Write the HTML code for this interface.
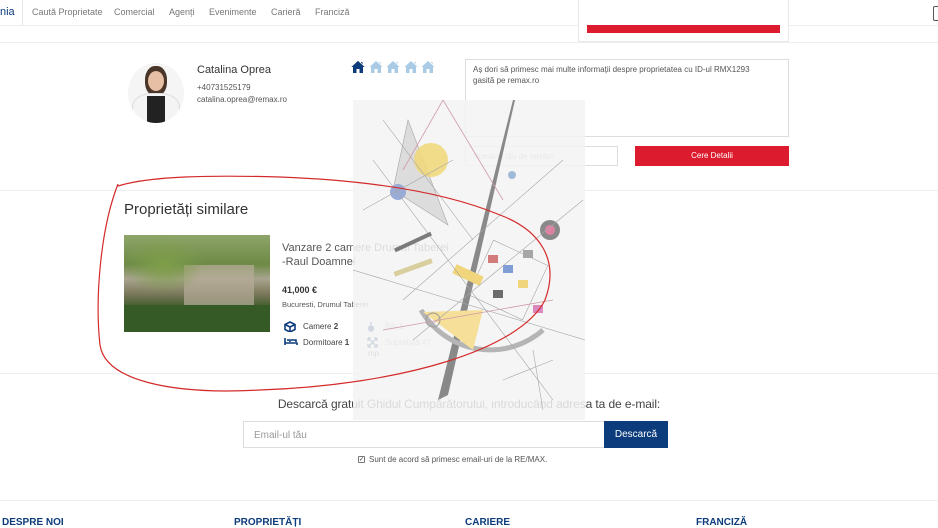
<!DOCTYPE html>
<html><head><meta charset="utf-8"><style>
*{margin:0;padding:0;box-sizing:border-box}
body{width:938px;height:527px;overflow:hidden;background:#fff;font-family:"Liberation Sans",Arial,sans-serif;color:#333;position:relative}
.a{position:absolute;white-space:nowrap}
.hl{position:absolute;left:0;width:938px;height:1px;background:#eee}
.nav{font-size:9px;color:#777;top:7px}
</style></head><body>
<div class="a" style="left:0;top:6px;font-size:11px;color:#0c3c7c">nia</div>
<div class="a" style="left:22px;top:0;width:1px;height:25px;background:#e5e5e5"></div>
<div class="a nav" style="left:32px">Caută Proprietate</div>
<div class="a nav" style="left:114px">Comercial</div>
<div class="a nav" style="left:169px">Agenți</div>
<div class="a nav" style="left:209px">Evenimente</div>
<div class="a nav" style="left:271px">Carieră</div>
<div class="a nav" style="left:315px">Franciză</div>
<div class="a" style="left:933px;top:6px;width:10px;height:15px;border:1px solid #555;border-radius:2px"></div>
<div class="hl" style="top:25px"></div>
<div class="a" style="left:578px;top:0;width:211px;height:42px;border:1px solid #e8e8e8;border-top:none;background:#fff"></div>
<div class="a" style="left:587px;top:25px;width:193px;height:8px;background:#dc1c2e"></div>
<div class="hl" style="top:42px"></div>

<div class="a" style="left:128px;top:63px;width:56px;height:60px;border-radius:50%;overflow:hidden;background:#f5f5f5">
 <div class="a" style="left:17px;top:3px;width:22px;height:30px;border-radius:45%;background:#4a3628"></div>
 <div class="a" style="left:20px;top:8px;width:16px;height:20px;border-radius:50%;background:#e6bfa5"></div>
 <div class="a" style="left:4px;top:30px;width:48px;height:35px;border-radius:40% 40% 0 0;background:#f4f4f4;border:1px solid #ddd"></div>
 <div class="a" style="left:19px;top:33px;width:18px;height:30px;background:#222"></div>
</div>
<div class="a" style="left:197px;top:64px;font-size:11px;color:#333">Catalina Oprea</div>
<div class="a" style="left:197px;top:83px;font-size:8px;color:#555">+40731525179</div>
<div class="a" style="left:197px;top:95px;font-size:8px;color:#555">catalina.oprea@remax.ro</div>

<svg class="a" style="left:351px;top:60px" width="88" height="14" viewBox="0 0 88 14">
 <g id="h"><path d="M7 1 L0.5 7 L2 7 L2 13 L5.5 13 L5.5 9 L8.5 9 L8.5 13 L12 13 L12 7 L13.5 7 Z M10 2 L11.5 2 L11.5 4.5 Z"/></g>
 <use href="#h" fill="#0c3c7c"/>
 <use href="#h" x="18" fill="#a9cbe6"/><use href="#h" x="35" fill="#a9cbe6"/><use href="#h" x="53" fill="#a9cbe6"/><use href="#h" x="70" fill="#a9cbe6"/>
</svg>

<div class="a" style="left:465px;top:59px;width:324px;height:78px;border:1px solid #ddd;font-size:8px;line-height:11px;color:#555;padding:4px 26px 4px 7px;white-space:normal">Aș dori să primesc mai multe informații despre proprietatea cu ID-ul RMX1293 gasită pe remax.ro</div>
<div class="a" style="left:465px;top:146px;width:153px;height:20px;border:1px solid #ddd;font-size:8px;color:#aaa;padding:5px 7px">Numărul tău de telefon</div>
<div class="a" style="left:635px;top:146px;width:154px;height:20px;background:#dc1c2e;color:#fff;font-size:8px;text-align:center;line-height:20px">Cere Detalii</div>
<div class="hl" style="top:190px"></div>

<div class="a" style="left:124px;top:201px;font-size:15px;color:#333">Proprietăți similare</div>
<div class="a" style="left:124px;top:235px;width:146px;height:97px;background:linear-gradient(180deg,#8fa56a 0%,#6d8a45 30%,#a8a48e 45%,#7d7a5e 60%,#3f5a2a 75%,#2d4a1e 100%)">
 <div class="a" style="left:60px;top:30px;width:70px;height:45px;background:#b6ad98;opacity:.7"></div>
 <div class="a" style="left:0;top:70px;width:146px;height:27px;background:#355a25"></div>
 <div class="a" style="left:0;top:0;width:80px;height:60px;background:radial-gradient(#7f9f4a,transparent 70%)"></div>
</div>
<div class="a" style="left:282px;top:241px;font-size:11px;line-height:14px;color:#555">Vanzare 2 camere Drumul Taberei<br>-Raul Doamnei</div>
<div class="a" style="left:282px;top:285px;font-size:9px;font-weight:bold;color:#333">41,000 €</div>
<div class="a" style="left:282px;top:300px;font-size:7.5px;color:#555">Bucuresti, Drumul Taberei</div>
<svg class="a" style="left:284px;top:321px" width="12" height="11"><path d="M6 1 L11 3.5 L11 8.5 L6 11 L1 8.5 L1 3.5 Z M1 3.5 L6 6 L11 3.5 M6 6 L6 11" fill="none" stroke="#0c3c7c" stroke-width="1.6"/></svg>
<div class="a" style="left:303px;top:322px;font-size:8px;color:#444">Camere <b>2</b></div>
<svg class="a" style="left:284px;top:337px" width="14" height="9"><path d="M1 1 L1 8 M1 6 L13 6 L13 8 M3 3 L6 3 L6 5 M7 3 L12 3 L12 5" fill="none" stroke="#0c3c7c" stroke-width="1.6"/></svg>
<div class="a" style="left:303px;top:338px;font-size:8px;color:#444">Dormitoare <b>1</b></div>
<svg class="a" style="left:367px;top:321px" width="8" height="11"><path d="M4 1 L4 4 M1.5 7.5 A2.5 2.5 0 1 0 6.5 7.5 A2.5 2.5 0 1 0 1.5 7.5" fill="#0c3c7c" stroke="#0c3c7c" stroke-width="1.3"/></svg>
<div class="a" style="left:385px;top:322px;font-size:8px;color:#aaa">Băi 1</div>
<svg class="a" style="left:367px;top:337px" width="11" height="11"><path d="M1 1 L10 10 M10 1 L1 10 M1 1 L4 1 M1 1 L1 4 M10 1 L7 1 M10 1 L10 4 M1 10 L4 10 M1 10 L1 7 M10 10 L7 10 M10 10 L10 7" stroke="#0c3c7c" stroke-width="1.3"/></svg>
<div class="a" style="left:385px;top:338px;font-size:8px;color:#aaa">Suprafață 47</div>
<div class="a" style="left:368px;top:349px;font-size:8px;color:#666">mp</div>
<div class="hl" style="top:373px"></div>

<div class="a" style="left:0;width:938px;text-align:center;top:397px;font-size:12px;color:#444;letter-spacing:-0.1px">Descarcă gratuit Ghidul Cumpărătorului, introducând adresa ta de e-mail:</div>
<div class="a" style="left:243px;top:421px;width:362px;height:27px;border:1px solid #ddd;font-size:10px;color:#999;padding:8px 10px">Email-ul tău</div>
<div class="a" style="left:604px;top:421px;width:64px;height:27px;background:#0c3c7c;color:#fff;font-size:10px;text-align:center;line-height:27px">Descarcă</div>
<div class="a" style="left:358px;top:456px;width:7px;height:7px;border:1px solid #777;border-radius:1px;font-size:6px;line-height:6px;text-align:center">✓</div>
<div class="a" style="left:369px;top:455px;font-size:8px;color:#555">Sunt de acord să primesc email-uri de la RE/MAX.</div>
<div class="hl" style="top:500px"></div>
<div class="a" style="left:2px;top:517px;font-size:10px;font-weight:bold;color:#0c3c7c">DESPRE NOI</div>
<div class="a" style="left:234px;top:517px;font-size:10px;font-weight:bold;color:#0c3c7c">PROPRIETĂȚI</div>
<div class="a" style="left:465px;top:517px;font-size:10px;font-weight:bold;color:#0c3c7c">CARIERE</div>
<div class="a" style="left:696px;top:517px;font-size:10px;font-weight:bold;color:#0c3c7c">FRANCIZĂ</div>

<svg class="a" style="left:353px;top:100px" width="232" height="320" viewBox="0 0 232 320">
 <rect width="232" height="320" fill="#f3f3f3" opacity=".85"/>
 <g opacity=".85">
 <polygon points="55,20 95,125 40,90" fill="#d8d8d8" stroke="#999" stroke-width=".6"/>
 <circle cx="78" cy="60" r="17" fill="#f0d468" opacity=".9"/>
 <circle cx="45" cy="92" r="8" fill="#8a9fd2"/>
 <circle cx="197" cy="130" r="10" fill="#777"/><circle cx="197" cy="130" r="5" fill="#d96f95"/>
 <polygon points="160,0 162,0 95,295 85,300" fill="#777"/>
 <circle cx="159" cy="75" r="4" fill="#8fb0d2"/>
 <path d="M68 210 A80 80 0 0 0 190 230" fill="none" stroke="#aaa" stroke-width="5"/>
 <path d="M70 212 L130 210 L120 250 Z" fill="#f5dc8a"/>
 <g stroke="#888" stroke-width=".5">
 <rect x="125" y="150" width="60" height="60" fill="none" transform="rotate(25 155 180)"/>
 </g>
 <rect x="135" y="155" width="10" height="8" fill="#c66"/><rect x="150" y="165" width="10" height="8" fill="#6a8fd0"/><rect x="165" y="180" width="10" height="8" fill="#f0d068"/><rect x="180" y="205" width="10" height="8" fill="#d675b5"/><rect x="100" y="170" width="30" height="10" fill="#f0d068" transform="rotate(25 115 175)"/><rect x="140" y="190" width="10" height="8" fill="#555"/><rect x="170" y="150" width="10" height="8" fill="#999"/>
 <circle cx="80" cy="220" r="7" fill="none" stroke="#888"/>
 <g stroke="#999" stroke-width=".6" fill="none">
 <path d="M30 20 L120 140 M10 110 L100 60 M50 200 L210 60 M0 170 L232 240 M60 240 L230 100 M20 60 L200 300 M150 280 L200 260 M180 250 L190 310"/>
 </g>
 <g stroke="#c98a9a" stroke-width=".8" fill="none"><path d="M50 70 L90 0 L150 100 M30 230 L200 200"/></g>
 <rect x="40" y="140" width="40" height="4" fill="#666" transform="rotate(-25 60 142)"/>
 <rect x="40" y="165" width="40" height="5" fill="#d4c88f" transform="rotate(-20 60 167)"/>
 </g>
</svg>

<svg class="a" style="left:0;top:0" width="938" height="527">
 <path d="M118 184 C100 230,95 300,100 345 C105 380,170 395,260 390 C400 385,520 350,545 300 C560 260,540 230,500 215 C440 190,360 180,280 177 C210 175,150 176,118 186" fill="none" stroke="#d42a2a" stroke-width="1.2"/>
</svg>
</body></html>
